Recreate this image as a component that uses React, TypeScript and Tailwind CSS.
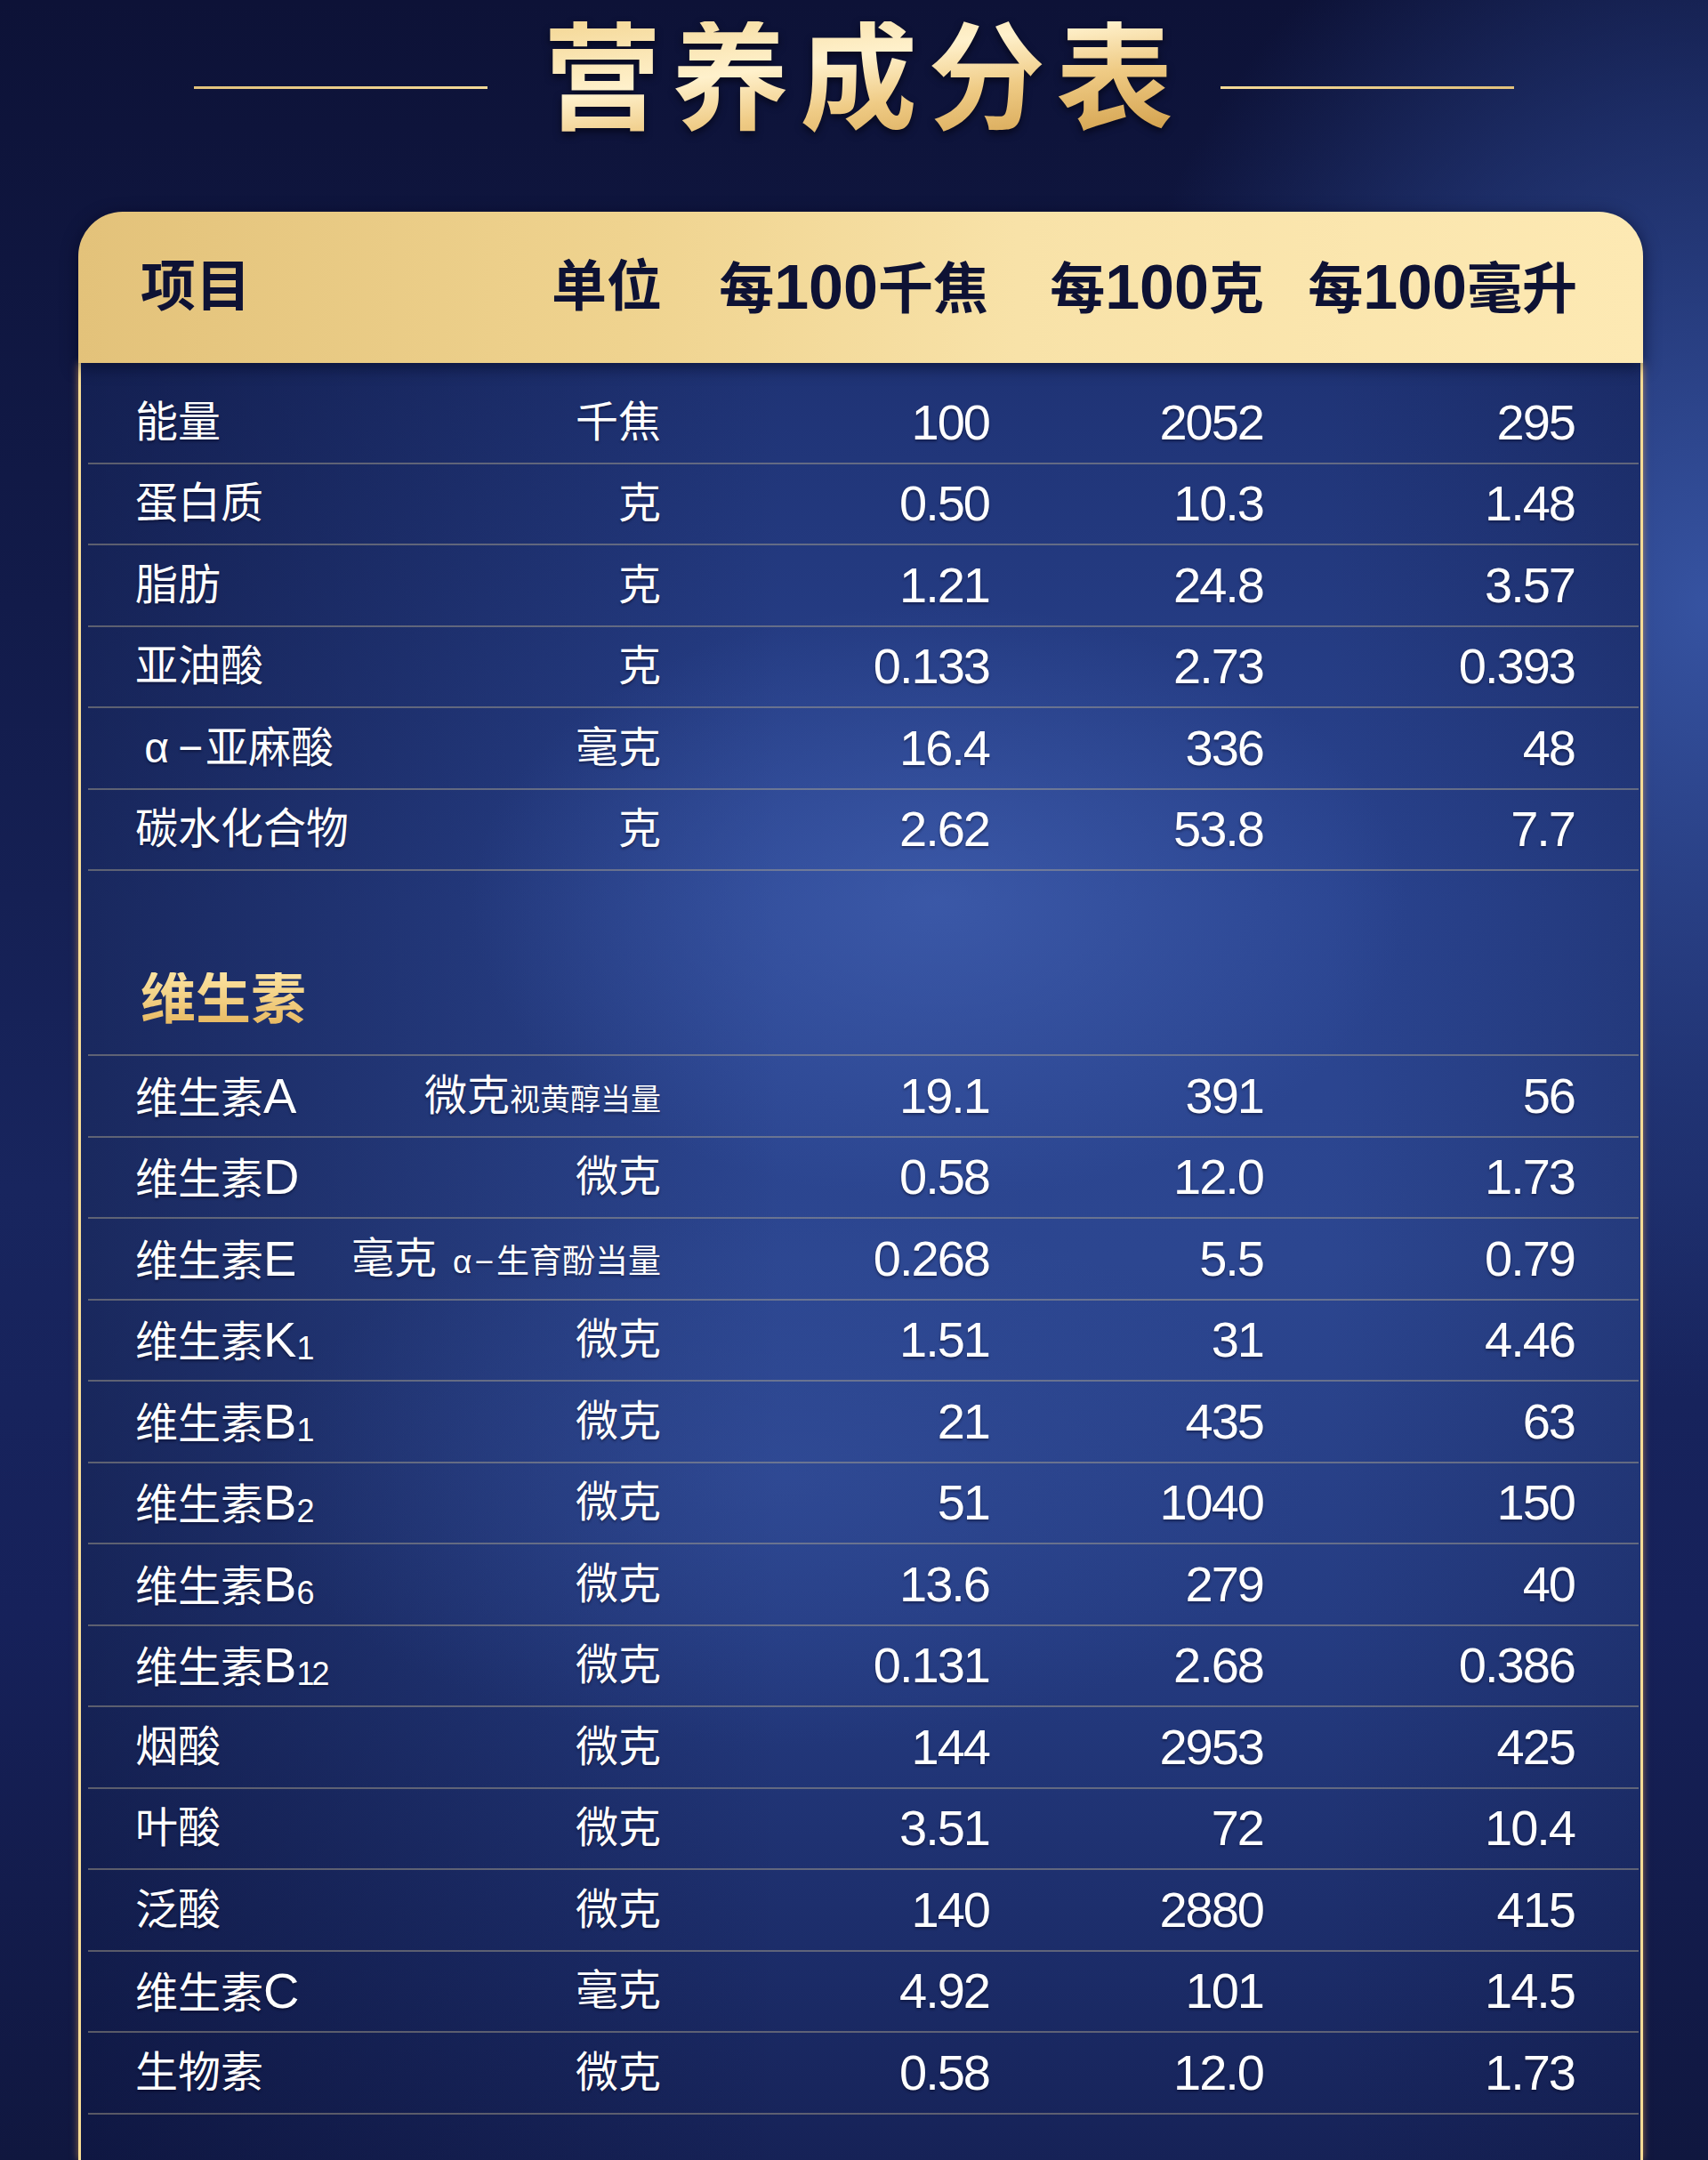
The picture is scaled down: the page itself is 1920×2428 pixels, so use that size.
import React from "react";

type RowData = {
  label: React.ReactNode;
  unit: React.ReactNode;
  a: string;
  b: string;
  c: string;
};

const Sub = ({ children }: { children: React.ReactNode }) => (
  <span className="text-[36px] tracking-[-3px] align-[-3px]">{children}</span>
);

const Lat = ({ children }: { children: React.ReactNode }) => (
  <span className="text-[56px]">{children}</span>
);

const basic: RowData[] = [
  { label: "能量", unit: "千焦", a: "100", b: "2052", c: "295" },
  { label: "蛋白质", unit: "克", a: "0.50", b: "10.3", c: "1.48" },
  { label: "脂肪", unit: "克", a: "1.21", b: "24.8", c: "3.57" },
  { label: "亚油酸", unit: "克", a: "0.133", b: "2.73", c: "0.393" },
  {
    label: (
      <>
        <span className="inline-block w-[48px] text-center">α</span>
        <span className="mr-[3px] inline-block">−</span>
        亚麻酸
      </>
    ),
    unit: "毫克",
    a: "16.4",
    b: "336",
    c: "48",
  },
  { label: "碳水化合物", unit: "克", a: "2.62", b: "53.8", c: "7.7" },
];

const vitamins: RowData[] = [
  {
    label: (
      <>
        维生素<Lat>A</Lat>
      </>
    ),
    unit: (
      <>
        微克<span className="text-[34px]">视黄醇当量</span>
      </>
    ),
    a: "19.1",
    b: "391",
    c: "56",
  },
  {
    label: (
      <>
        维生素<Lat>D</Lat>
      </>
    ),
    unit: "微克",
    a: "0.58",
    b: "12.0",
    c: "1.73",
  },
  {
    label: (
      <>
        维生素<Lat>E</Lat>
      </>
    ),
    unit: (
      <>
        毫克
        <span className="ml-[18px] text-[37px]">
          α<span className="mx-[3px] inline-block">−</span>生育酚当量
        </span>
      </>
    ),
    a: "0.268",
    b: "5.5",
    c: "0.79",
  },
  {
    label: (
      <>
        维生素<Lat>K</Lat>
        <Sub>1</Sub>
      </>
    ),
    unit: "微克",
    a: "1.51",
    b: "31",
    c: "4.46",
  },
  {
    label: (
      <>
        维生素<Lat>B</Lat>
        <Sub>1</Sub>
      </>
    ),
    unit: "微克",
    a: "21",
    b: "435",
    c: "63",
  },
  {
    label: (
      <>
        维生素<Lat>B</Lat>
        <Sub>2</Sub>
      </>
    ),
    unit: "微克",
    a: "51",
    b: "1040",
    c: "150",
  },
  {
    label: (
      <>
        维生素<Lat>B</Lat>
        <Sub>6</Sub>
      </>
    ),
    unit: "微克",
    a: "13.6",
    b: "279",
    c: "40",
  },
  {
    label: (
      <>
        维生素<Lat>B</Lat>
        <Sub>12</Sub>
      </>
    ),
    unit: "微克",
    a: "0.131",
    b: "2.68",
    c: "0.386",
  },
  { label: "烟酸", unit: "微克", a: "144", b: "2953", c: "425" },
  { label: "叶酸", unit: "微克", a: "3.51", b: "72", c: "10.4" },
  { label: "泛酸", unit: "微克", a: "140", b: "2880", c: "415" },
  {
    label: (
      <>
        维生素<Lat>C</Lat>
      </>
    ),
    unit: "毫克",
    a: "4.92",
    b: "101",
    c: "14.5",
  },
  { label: "生物素", unit: "微克", a: "0.58", b: "12.0", c: "1.73" },
];

function Row({ r }: { r: RowData }) {
  return (
    <div className="grid h-[91.5px] grid-cols-[291px_353px_369px_308px_350px_1fr] items-center border-b-2 border-[rgba(190,178,145,0.42)] leading-none text-white [text-shadow:0_2px_3px_rgba(0,0,25,0.45)]">
      <div className="whitespace-nowrap pl-[53px] text-[48px]">{r.label}</div>
      <div className="whitespace-nowrap text-right text-[48px]">{r.unit}</div>
      <div className="text-right text-[56px] tracking-[-2px]">{r.a}</div>
      <div className="text-right text-[56px] tracking-[-2px]">{r.b}</div>
      <div className="text-right text-[56px] tracking-[-2px]">{r.c}</div>
      <div />
    </div>
  );
}

const D = ({ children }: { children: React.ReactNode }) => (
  <span className="text-[70px]">{children}</span>
);

export default function App() {
  return (
    <div className="flex h-[2428px] w-[1920px] flex-col overflow-hidden bg-[radial-gradient(ellipse_46%_46%_at_100%_28%,rgba(56,86,166,0.95),rgba(40,64,135,0.55)_50%,transparent_80%),linear-gradient(180deg,#0d1237_0%,#121b4a_28%,#18255e_55%,#16215a_75%,#10173f_100%)] font-['Liberation_Sans','Noto_Sans_CJK_SC',sans-serif]">
      {/* Title */}
      <div className="flex h-[180px] shrink-0 items-center justify-center">
        <div className="mr-[63px] mt-[16px] h-[3px] w-[330px] bg-[linear-gradient(90deg,#e2c27c,#f3d997)]" />
        <h1 className="mr-[-12px] bg-[linear-gradient(172deg,#f4d795_0%,#fff1cc_38%,#efcb85_62%,#cf9b45_100%)] bg-clip-text text-[132px] font-bold leading-none tracking-[12px] text-transparent drop-shadow-[0_4px_4px_rgba(0,0,10,0.6)]">
          营养成分表
        </h1>
        <div className="ml-[53px] mt-[16px] h-[3px] w-[330px] bg-[linear-gradient(90deg,#f3d997,#e2c27c)]" />
      </div>

      {/* Header */}
      <div className="relative z-10 ml-[88px] mr-[73px] mt-[58px] grid h-[170px] shrink-0 grid-cols-[302px_354px_367px_310px_352px_1fr] items-center rounded-t-[50px] bg-[linear-gradient(90deg,#e3c27a_0%,#efd38f_35%,#f8e2a8_60%,#fde9b3_100%)] font-bold leading-none text-[#0e1234] shadow-[0_4px_18px_rgba(3,6,30,0.65)]">
        <div className="pl-[70px] text-[62px]">项目</div>
        <div className="text-right text-[62px]">单位</div>
        <div className="whitespace-nowrap text-right text-[62px]">
          每<D>100</D>千焦
        </div>
        <div className="whitespace-nowrap text-right text-[62px]">
          每<D>100</D>克
        </div>
        <div className="whitespace-nowrap text-right text-[62px]">
          每<D>100</D>毫升
        </div>
        <div />
      </div>

      {/* Body */}
      <div className="ml-[88px] mr-[73px] flex-1 border-x-[3px] border-[#f7dc95] bg-[radial-gradient(ellipse_40%_22%_at_55%_30%,rgba(72,104,186,0.55),transparent_75%),radial-gradient(ellipse_45%_20%_at_45%_62%,rgba(60,90,170,0.35),transparent_75%),linear-gradient(90deg,rgba(8,12,45,0.5)_0%,rgba(8,12,45,0)_45%,rgba(8,12,45,0)_80%,rgba(8,12,45,0.2)_100%),linear-gradient(180deg,#1f3375_0%,#2a4490_30%,#2c4690_50%,#253c82_70%,#1c2d6a_88%,#162257_100%)] pt-[22px] shadow-[0_0_8px_rgba(255,170,80,0.55)]">
        <div className="ml-[8px] mr-[2px]">
          {basic.map((r, i) => (
            <Row key={i} r={r} />
          ))}
          <div className="flex h-[208px] items-end border-b-2 border-[rgba(190,178,145,0.42)] pb-[30px] pl-[59px]">
            <span className="bg-[linear-gradient(180deg,#fbe2a0_0%,#f2cf82_50%,#e6b65e_100%)] bg-clip-text text-[62px] font-bold leading-none text-transparent">
              维生素
            </span>
          </div>
          {vitamins.map((r, i) => (
            <Row key={i} r={r} />
          ))}
        </div>
      </div>
    </div>
  );
}
